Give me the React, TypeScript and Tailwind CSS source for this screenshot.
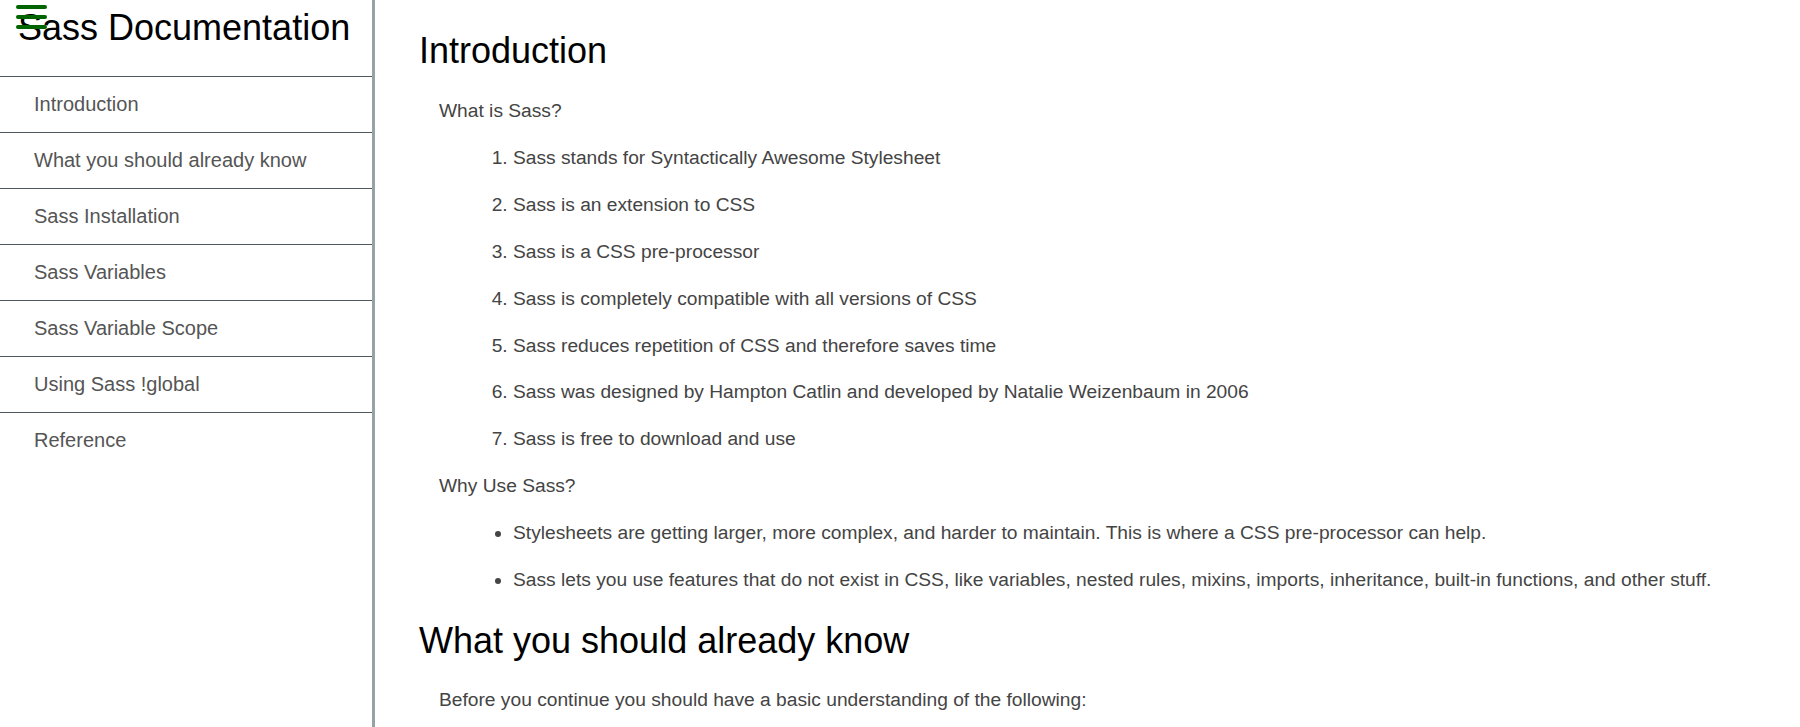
import React from "react";

const navItems = [
  "Introduction",
  "What you should already know",
  "Sass Installation",
  "Sass Variables",
  "Sass Variable Scope",
  "Using Sass !global",
  "Reference",
];

const whatIs = [
  "Sass stands for Syntactically Awesome Stylesheet",
  "Sass is an extension to CSS",
  "Sass is a CSS pre-processor",
  "Sass is completely compatible with all versions of CSS",
  "Sass reduces repetition of CSS and therefore saves time",
  "Sass was designed by Hampton Catlin and developed by Natalie Weizenbaum in 2006",
  "Sass is free to download and use",
];

const why = [
  "Stylesheets are getting larger, more complex, and harder to maintain. This is where a CSS pre-processor can help.",
  "Sass lets you use features that do not exist in CSS, like variables, nested rules, mixins, imports, inheritance, built-in functions, and other stuff.",
];

export default function App() {
  return (
    <div
      className="flex h-screen w-full overflow-hidden bg-white"
      style={{ fontFamily: '"Liberation Sans", Arial, sans-serif' }}
    >
      <aside className="relative w-[375px] shrink-0 border-r-[3px] border-[#98a1a4] bg-white">
        <div className="absolute left-[16px] top-[5px] flex flex-col gap-[6px]">
          <span className="block h-[4px] w-[31px] rounded-full bg-[#006400]" />
          <span className="block h-[4px] w-[31px] rounded-full bg-[#006400]" />
          <span className="block h-[4px] w-[31px] rounded-full bg-[#006400]" />
        </div>
        <header className="h-[76px] pl-[18px] pt-[7px]">
          <h1 className="text-[36px] font-normal leading-[41px] text-black">Sass Documentation</h1>
        </header>
        <nav>
          <ul>
            {navItems.map((item) => (
              <li
                key={item}
                className="border-t border-[#52575c] py-4 pl-[34px] text-[20px] leading-[23px] text-[#555555]"
              >
                {item}
              </li>
            ))}
          </ul>
        </nav>
      </aside>
      <main className="flex-1 overflow-hidden pl-[44px] pt-[30px] text-[19.2px] text-[#444444]">
        <h2 className="mb-[17px] text-[36px] font-normal leading-[41px] text-black">Introduction</h2>
        <p className="ml-5 leading-[46.9px]">What is Sass?</p>
        <ol className="ml-5 list-decimal pl-[74px]">
          {whatIs.map((t) => (
            <li key={t} className="leading-[46.9px]">
              {t}
            </li>
          ))}
        </ol>
        <p className="ml-5 leading-[46.9px]">Why Use Sass?</p>
        <ul className="ml-5 list-disc pl-[74px]">
          {why.map((t) => (
            <li key={t} className="leading-[46.9px]">
              {t}
            </li>
          ))}
        </ul>
        <h2 className="mb-[16px] mt-[16px] text-[36px] font-normal leading-[41px] text-black">
          What you should already know
        </h2>
        <p className="ml-5 leading-[46.9px]">
          Before you continue you should have a basic understanding of the following:
        </p>
      </main>
    </div>
  );
}
